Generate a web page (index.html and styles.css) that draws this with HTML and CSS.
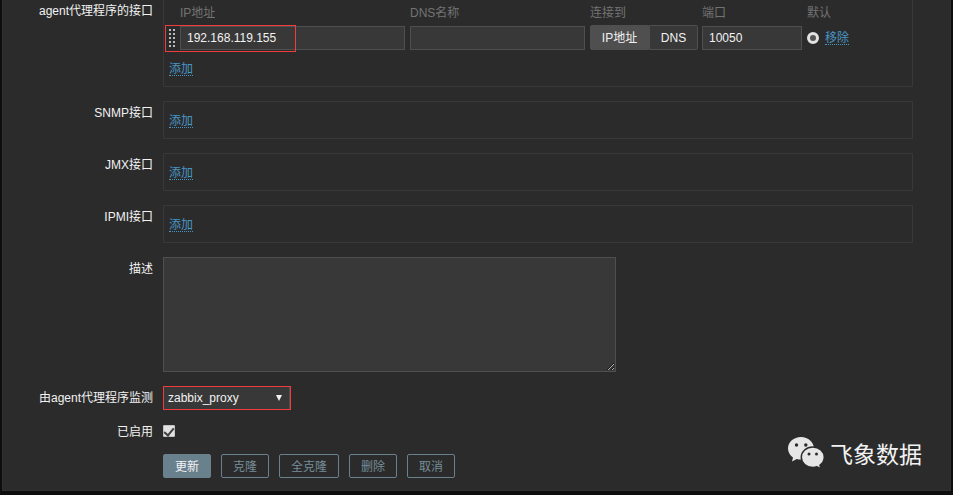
FILE: index.html
```html
<!DOCTYPE html>
<html lang="zh-CN">

<head>
    <meta charset="UTF-8">
    <meta name="viewport" content="width=device-width, initial-scale=1.0">
    <title>主机</title>
    <link rel="stylesheet" href="styles.css">
</head>

<body>
    <main class="panel">
        <form class="host-form">
            <div class="row">
                <span class="label">agent代理程序的接口</span>
                <div class="box box-agent">
                    <table class="interfaces">
                        <thead>
                            <tr>
                                <th class="col-drag"></th>
                                <th class="col-ip">IP地址</th>
                                <th class="col-dns">DNS名称</th>
                                <th class="col-connect">连接到</th>
                                <th class="col-port">端口</th>
                                <th>默认</th>
                            </tr>
                        </thead>
                        <tbody>
                            <tr>
                                <td class="drag-cell">
                                    <svg class="drag" width="6" height="18" viewBox="0 0 6 18" fill="#b4bcc0" shape-rendering="crispEdges">
                                        <path d="M0 0h2v2H0zM4 0h2v2H4zM0 4h2v2H0zM4 4h2v2H4zM0 8h2v2H0zM4 8h2v2H4zM0 12h2v2H0zM4 12h2v2H4zM0 16h2v2H0zM4 16h2v2H4z" />
                                    </svg>
                                    <span class="highlight"></span>
                                </td>
                                <td><input class="text" type="text" value="192.168.119.155" aria-label="IP地址"></td>
                                <td><input class="text" type="text" aria-label="DNS名称"></td>
                                <td>
                                    <div class="segmented">
                                        <button type="button" class="active">IP地址</button>
                                        <button type="button">DNS</button>
                                    </div>
                                </td>
                                <td><input class="text" type="text" value="10050" aria-label="端口"></td>
                                <td>
                                    <div class="default">
                                        <input class="radio" type="radio" name="default" aria-label="默认" checked>
                                        <a class="link" href="#">移除</a>
                                    </div>
                                </td>
                            </tr>
                        </tbody>
                    </table>
                    <a class="link add" href="#">添加</a>
                </div>
            </div>
            <div class="row">
                <span class="label">SNMP接口</span>
                <div class="box"><a class="link" href="#">添加</a></div>
            </div>
            <div class="row">
                <span class="label">JMX接口</span>
                <div class="box"><a class="link" href="#">添加</a></div>
            </div>
            <div class="row">
                <span class="label">IPMI接口</span>
                <div class="box"><a class="link" href="#">添加</a></div>
            </div>
            <div class="row">
                <label class="label" for="description">描述</label>
                <textarea id="description" class="description"></textarea>
            </div>
            <div class="row">
                <label class="label" for="proxy">由agent代理程序监测</label>
                <div class="select">
                    <select id="proxy">
                        <option>zabbix_proxy</option>
                    </select>
                </div>
            </div>
            <div class="row row-enabled">
                <label class="label" for="enabled">已启用</label>
                <input id="enabled" class="checkbox" type="checkbox" checked>
            </div>
            <div class="row">
                <div class="buttons">
                    <button type="button" class="btn primary">更新</button>
                    <button type="button" class="btn">克隆</button>
                    <button type="button" class="btn">全克隆</button>
                    <button type="button" class="btn">删除</button>
                    <button type="button" class="btn">取消</button>
                </div>
            </div>
        </form>
        <div class="watermark">
            <svg width="36" height="32" viewBox="0 0 36 32">
                <path fill="#e6e6e6" d="M13 0C5.800 0 0 5 0 11.500c0 3.600 1.900 6.800 5 8.900L4 24.500l4.800-2.600c1.300.4 2.700.6 4.200.6 7.200 0 13-4.900 13-11S20.200 0 13 0z" />
                <path fill="#e6e6e6" stroke="#2b2b2b" stroke-width="1.500" d="M24.800 10C18.400 10 13.300 14.500 13.300 20.200s5.100 10.200 11.500 10.200c1.500 0 2.900-.2 4.200-.7l4 2.100-1-3.600c2.600-1.900 4.300-4.700 4.300-8C36.300 14.500 31.200 10 24.800 10z" />
                <g fill="#2b2b2b">
                    <circle cx="8.500" cy="8" r="1.700" />
                    <circle cx="17.800" cy="8" r="1.700" />
                    <circle cx="21" cy="17" r="1.500" />
                    <circle cx="28.500" cy="17" r="1.500" />
                </g>
            </svg>
            <span>飞象数据</span>
        </div>
    </main>
</body>

</html>
```

FILE: styles.css
```css
* {
    box-sizing: border-box;
}

body {
    margin: 0;
    padding: 0 2px;
    background-color: #0e0e0e;
    color: #f2f2f2;
    font-family: "Liberation Sans", "Noto Sans CJK SC", sans-serif;
    font-size: 12px;
    line-height: 16px;
}

input,
select,
textarea,
button {
    margin: 0;
    font: inherit;
    color: inherit;
}

.panel {
    position: relative;
    padding: 0 37px 12px 0;
    border: 1px solid #303030;
    border-top: none;
    background-color: #2b2b2b;
}

.host-form {
    display: flex;
    flex-direction: column;
    gap: 14px;
}

.row {
    display: grid;
    grid-template-columns: 150px 1fr;
    column-gap: 10px;
    align-items: start;
}

.label {
    padding-top: 4px;
    text-align: right;
}

.box {
    padding: 11px 5px 10px;
    border: 1px solid #383838;
}

.box-agent {
    padding-top: 5px;
    border-top: none;
}

.row:first-child .label {
    padding-top: 3px;
}

.link {
    display: block;
    width: max-content;
    padding-top: 3px;
    border-bottom: 1px dotted #4796c4;
    color: #4796c4;
    line-height: 11px;
    text-decoration: none;
}

.add {
    margin-top: 11px;
}

/* agent interfaces */
.interfaces {
    width: 100%;
    border-collapse: collapse;
    table-layout: fixed;
}

.interfaces th {
    height: 20px;
    padding: 0;
    color: #737373;
    font-weight: normal;
    text-align: left;
    vertical-align: top;
}

.interfaces td {
    padding: 0 5px 0 0;
}

.col-drag {
    width: 11px;
}

.col-ip {
    width: 230px;
}

.col-dns {
    width: 180px;
}

.col-connect {
    width: 112px;
}

.col-port {
    width: 105px;
}

.interfaces .drag-cell {
    position: relative;
}

.drag {
    display: block;
}

.highlight {
    position: absolute;
    top: 0;
    left: -4px;
    width: 131px;
    height: 27px;
    border: 1px solid #f03c3c;
    pointer-events: none;
}

.text {
    display: block;
    width: 100%;
    height: 24px;
    padding: 0 6px;
    border: 1px solid #4f4f4f;
    background-color: #383838;
}

.segmented {
    display: flex;
    width: 108px;
    height: 25px;
}

.segmented button {
    flex: 1 0 auto;
    padding: 0 10px;
    border: 1px solid #4f4f4f;
    border-radius: 0 2px 2px 0;
    background-color: #383838;
}

.segmented .active {
    border-radius: 2px 0 0 2px;
    background-color: #4f4f4f;
}

.default {
    display: flex;
    align-items: center;
    gap: 6px;
}

.radio {
    width: 12px;
    height: 12px;
    border: 3px solid #e2e2e2;
    border-radius: 50%;
    appearance: none;
    background-color: #555;
}

.description {
    display: block;
    width: 453px;
    max-width: 100%;
    height: 115px;
    padding: 4px 5px;
    border: 1px solid #4f4f4f;
    background-color: #383838;
}

.select {
    position: relative;
    width: 128px;
    border: 1px solid #f03c3c;
}

.select select {
    display: block;
    width: 100%;
    height: 22px;
    padding: 0 4px;
    border: 0 solid #4f4f4f;
    border-right-width: 1px;
    border-radius: 0;
    appearance: none;
    background-color: #383838;
}

.select::after {
    content: "";
    position: absolute;
    top: 8px;
    right: 8px;
    border: 3px solid transparent;
    border-top: 6px solid #f2f2f2;
    border-bottom: none;
    pointer-events: none;
}

.row-enabled {
    height: 16px;
}

.row-enabled .label {
    padding: 0;
}

.checkbox {
    display: grid;
    place-items: center;
    width: 12px;
    height: 12px;
    margin-top: 1px;
    border: 1px solid #c4c4c4;
    border-radius: 1px;
    appearance: none;
    background-color: #e2e2e2;
}

.checkbox:checked::after {
    content: "";
    width: 4px;
    height: 8px;
    border: solid #404040;
    border-width: 0 2px 2px 0;
    transform: rotate(40deg);
}

.buttons {
    grid-column: 2;
    display: flex;
    gap: 10px;
}

.btn {
    height: 24px;
    padding: 1px 10px 0;
    border: 1px solid #69808d;
    border-radius: 2px;
    background-color: transparent;
    color: #768d99;
    min-width: 48px;
}

.primary {
    background-color: #69808d;
    color: #f2f2f2;
}

.btn:nth-child(3) {
    min-width: 60px;
}

.watermark {
    position: absolute;
    right: 28px;
    bottom: 20px;
    display: flex;
    align-items: center;
    gap: 6px;
    color: #f2f2f2;
    font-family: "Noto Sans CJK SC", sans-serif;
    font-size: 23px;
    line-height: 34px;
}
```
